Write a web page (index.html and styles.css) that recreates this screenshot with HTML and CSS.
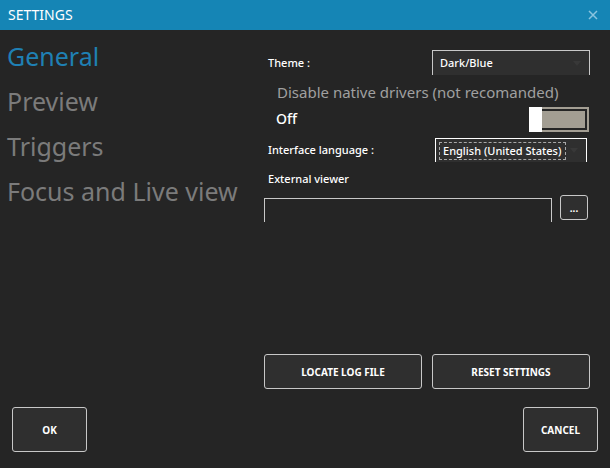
FILE: index.html
```html
<!DOCTYPE html>
<html lang="en">
<head>
<meta charset="utf-8">
<title>Settings</title>
<link rel="stylesheet" href="styles.css">
</head>
<body>
<header class="titlebar">
  <h1>SETTINGS</h1>
  <button class="close" type="button" aria-label="Close">
    <svg width="10" height="10" viewBox="0 0 10 10"><path d="M1 1L9 9M9 1L1 9" fill="none" stroke="currentColor" stroke-width="1.5"/></svg>
  </button>
</header>
<main class="body">
  <nav class="tabs">
    <a class="active" href="#general">General</a>
    <a href="#preview">Preview</a>
    <a href="#triggers">Triggers</a>
    <a href="#focus">Focus and Live view</a>
  </nav>
  <section class="panel" id="general">
    <div class="row theme-row">
      <label for="theme">Theme :</label>
      <div class="combo theme">
        <select id="theme"><option>Dark/Blue</option></select>
        <svg width="8" height="5" viewBox="0 0 8 5"><path d="M0 0H8L4 5Z" fill="#383838"/></svg>
      </div>
    </div>
    <label class="switch-title" for="native">Disable native drivers (not recomanded)</label>
    <div class="row switch-row">
      <span class="state">Off</span>
      <input class="switch" id="native" type="checkbox">
    </div>
    <div class="row language-row">
      <label for="language">Interface language :</label>
      <div class="combo language">
        <select id="language"><option>English (United States)</option></select>
        <svg width="8" height="5" viewBox="0 0 8 5"><path d="M0 0H8L4 5Z" fill="#383838"/></svg>
      </div>
    </div>
    <label class="viewer-label" for="viewer">External viewer</label>
    <div class="viewer-row">
      <input id="viewer" type="text">
      <button class="browse" type="button" aria-label="Browse">...</button>
    </div>
    <div class="actions">
      <button type="button">LOCATE LOG FILE</button>
      <button type="button">RESET SETTINGS</button>
    </div>
  </section>
</main>
<footer class="footer">
  <button type="button">OK</button>
  <button type="button">CANCEL</button>
</footer>
</body>
</html>
```
FILE: styles.css
```css
* {
  box-sizing: border-box;
}

body {
  margin: 0;
  min-height: 100vh;
  display: flex;
  flex-direction: column;
  background: #252525;
  color: #fff;
  font: 500 11px/16px "Noto Sans", "Open Sans", sans-serif;
}

button,
input,
select {
  font: inherit;
  color: inherit;
  margin: 0;
}

button {
  padding: 0;
  border: 1px solid #c8c8c8;
  border-radius: 3px;
  background: #2f2f2f;
  font-size: 10px;
  font-weight: 700;
}

.titlebar {
  display: flex;
  align-items: center;
  justify-content: space-between;
  height: 30px;
  padding: 0 12px 0 8px;
  background: #1585b5;
}

.titlebar h1 {
  margin: 0;
  font-size: 14px;
  font-weight: 400;
}

.close {
  display: flex;
  border: 0;
  background: none;
  color: #8ac4df;
}

.body {
  flex: 1;
  display: grid;
  grid-template-columns: 264px 1fr;
}

.tabs {
  display: flex;
  flex-direction: column;
  padding: 4px 0 0 7px;
}

.tabs a {
  font-size: 25px;
  font-weight: 400;
  line-height: 45px;
  color: #7b7b7b;
  text-decoration: none;
  white-space: nowrap;
}

.tabs .active {
  color: #1f80b4;
}

.panel {
  display: flex;
  flex-direction: column;
  padding: 20px 20px 0 0;
}

.row {
  display: flex;
  align-items: center;
  justify-content: space-between;
  padding-left: 4px;
}

.combo {
  display: flex;
  align-items: center;
  justify-content: space-between;
  border: 1px solid #c8c8c8;
  border-bottom: 0;
  background: #2f2f2f;
}

.combo select {
  appearance: none;
  border: 0;
  border-radius: 0;
  background: none;
  padding: 0 3px;
  outline: 0;
}

.theme {
  width: 158px;
  height: 25px;
  padding: 0 8px 0 4px;
}

.switch-title {
  padding: 6px 0 0 13px;
  font-size: 15px;
  font-weight: 400;
  line-height: 22px;
  color: #a0a0a0;
}

.switch-row {
  padding: 4px 1px 0 12px;
}

.state {
  padding-bottom: 2px;
  font-size: 14px;
}

.switch {
  appearance: none;
  display: flex;
  width: 60px;
  height: 25px;
}

.switch::before {
  content: "";
  width: 13px;
  background: #fff;
}

.switch::after {
  content: "";
  flex: 1;
  border: 2px solid #a39e93;
  border-left: 0;
  padding: 2px 2px 2px 0;
  background: #a39e93 content-box;
}

.language-row {
  padding: 6px 3px 0 4px;
}

.language {
  width: 152px;
  height: 24px;
  padding: 0 8px 0 3px;
  border-color: #fff;
}

.language select {
  width: 127px;
  height: 18px;
  border: 1px dashed #a8a8a8;
}

.viewer-label {
  padding: 9px 0 0 4px;
}

.viewer-row {
  display: flex;
  gap: 8px;
  padding: 8px 2px 0 0;
}

.viewer-row input {
  flex: 1;
  min-width: 0;
  height: 24px;
  margin-top: 3px;
  border: 1px solid #c8c8c8;
  border-bottom: 0;
  background: none;
  outline: 0;
}

.browse {
  width: 28px;
  height: 25px;
}

.actions {
  display: grid;
  grid-template-columns: 1fr 1fr;
  gap: 10px;
  margin-top: auto;
}

.actions button {
  height: 35px;
}

.footer {
  display: flex;
  justify-content: space-between;
  padding: 18px 12px 16px;
}

.footer button {
  width: 75px;
  height: 45px;
}
```
